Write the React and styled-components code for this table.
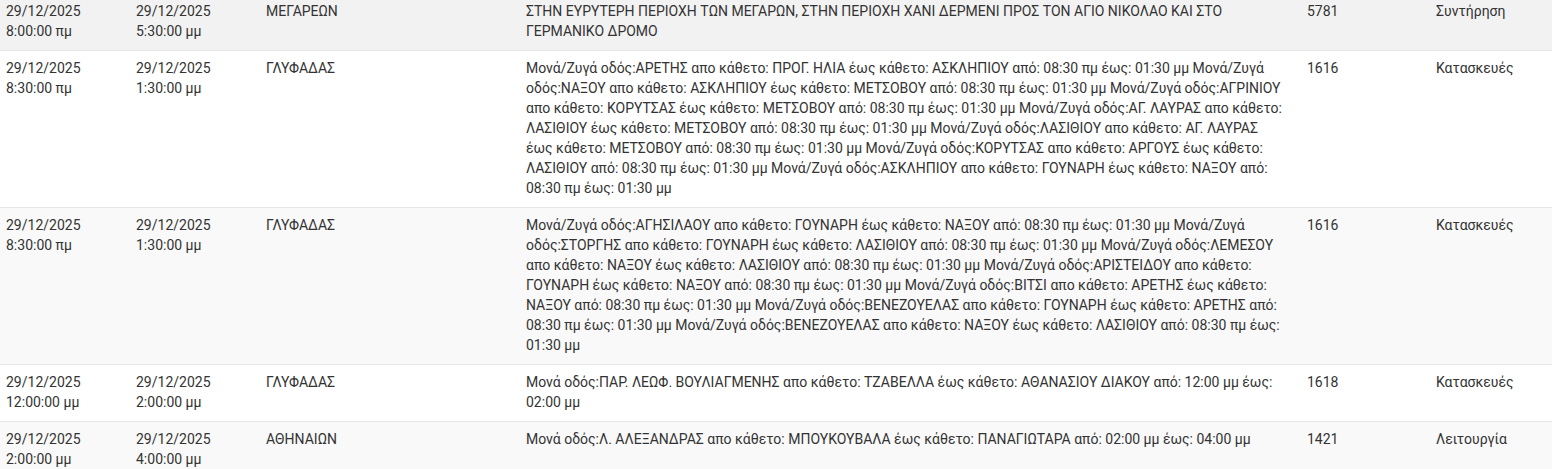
import styled, { createGlobalStyle } from "styled-components";

const GlobalStyle = createGlobalStyle`
  html, body {
    margin: 0;
    padding: 0;
    background: #fff;
    overflow: hidden;
  }
  body {
    font-family: Roboto, "Liberation Sans", sans-serif;
    font-size: 14px;
    color: #333;
  }
`;

const TableWrap = styled.div`
  width: 1552px;
  margin-top: -7px;
`;

const Table = styled.table`
  width: 100%;
  border-collapse: collapse;
  table-layout: fixed;
`;

const Row = styled.tr`
  background: ${props =>
    props.hovered ? "#f2f2f2" : props.striped ? "#f9f9f9" : "#fff"};
  border-top: 1px solid #e6e6e6;
`;

const Cell = styled.td`
  padding: 7px ${props => (props.wide ? "14px" : "6px")} 9px 6px;
  vertical-align: top;
  line-height: 20px;
  word-wrap: break-word;
`;

const Line = styled.div`
  white-space: nowrap;
`;

const outages = [
  {
    from: ["29/12/2025", "8:00:00 πμ"],
    to: ["29/12/2025", "5:30:00 μμ"],
    area: "ΜΕΓΑΡΕΩΝ",
    description:
      "ΣΤΗΝ ΕΥΡΥΤΕΡΗ ΠΕΡΙΟΧΗ ΤΩΝ ΜΕΓΑΡΩΝ, ΣΤΗΝ ΠΕΡΙΟΧΗ ΧΑΝΙ ΔΕΡΜΕΝΙ ΠΡΟΣ ΤΟΝ ΑΓΙΟ ΝΙΚΟΛΑΟ ΚΑΙ ΣΤΟ ΓΕΡΜΑΝΙΚΟ ΔΡΟΜΟ",
    code: "5781",
    reason: "Συντήρηση"
  },
  {
    from: ["29/12/2025", "8:30:00 πμ"],
    to: ["29/12/2025", "1:30:00 μμ"],
    area: "ΓΛΥΦΑΔΑΣ",
    description:
      "Μονά/Ζυγά οδός:ΑΡΕΤΗΣ απο κάθετο: ΠΡΟΓ. ΗΛΙΑ έως κάθετο: ΑΣΚΛΗΠΙΟΥ από: 08:30 πμ έως: 01:30 μμ Μονά/Ζυγά οδός:ΝΑΞΟΥ απο κάθετο: ΑΣΚΛΗΠΙΟΥ έως κάθετο: ΜΕΤΣΟΒΟΥ από: 08:30 πμ έως: 01:30 μμ Μονά/Ζυγά οδός:ΑΓΡΙΝΙΟΥ απο κάθετο: ΚΟΡΥΤΣΑΣ έως κάθετο: ΜΕΤΣΟΒΟΥ από: 08:30 πμ έως: 01:30 μμ Μονά/Ζυγά οδός:ΑΓ. ΛΑΥΡΑΣ απο κάθετο: ΛΑΣΙΘΙΟΥ έως κάθετο: ΜΕΤΣΟΒΟΥ από: 08:30 πμ έως: 01:30 μμ Μονά/Ζυγά οδός:ΛΑΣΙΘΙΟΥ απο κάθετο: ΑΓ. ΛΑΥΡΑΣ έως κάθετο: ΜΕΤΣΟΒΟΥ από: 08:30 πμ έως: 01:30 μμ Μονά/Ζυγά οδός:ΚΟΡΥΤΣΑΣ απο κάθετο: ΑΡΓΟΥΣ έως κάθετο: ΛΑΣΙΘΙΟΥ από: 08:30 πμ έως: 01:30 μμ Μονά/Ζυγά οδός:ΑΣΚΛΗΠΙΟΥ απο κάθετο: ΓΟΥΝΑΡΗ έως κάθετο: ΝΑΞΟΥ από: 08:30 πμ έως: 01:30 μμ",
    code: "1616",
    reason: "Κατασκευές"
  },
  {
    from: ["29/12/2025", "8:30:00 πμ"],
    to: ["29/12/2025", "1:30:00 μμ"],
    area: "ΓΛΥΦΑΔΑΣ",
    description:
      "Μονά/Ζυγά οδός:ΑΓΗΣΙΛΑΟΥ απο κάθετο: ΓΟΥΝΑΡΗ έως κάθετο: ΝΑΞΟΥ από: 08:30 πμ έως: 01:30 μμ Μονά/Ζυγά οδός:ΣΤΟΡΓΗΣ απο κάθετο: ΓΟΥΝΑΡΗ έως κάθετο: ΛΑΣΙΘΙΟΥ από: 08:30 πμ έως: 01:30 μμ Μονά/Ζυγά οδός:ΛΕΜΕΣΟΥ απο κάθετο: ΝΑΞΟΥ έως κάθετο: ΛΑΣΙΘΙΟΥ από: 08:30 πμ έως: 01:30 μμ Μονά/Ζυγά οδός:ΑΡΙΣΤΕΙΔΟΥ απο κάθετο: ΓΟΥΝΑΡΗ έως κάθετο: ΝΑΞΟΥ από: 08:30 πμ έως: 01:30 μμ Μονά/Ζυγά οδός:ΒΙΤΣΙ απο κάθετο: ΑΡΕΤΗΣ έως κάθετο: ΝΑΞΟΥ από: 08:30 πμ έως: 01:30 μμ Μονά/Ζυγά οδός:ΒΕΝΕΖΟΥΕΛΑΣ απο κάθετο: ΓΟΥΝΑΡΗ έως κάθετο: ΑΡΕΤΗΣ από: 08:30 πμ έως: 01:30 μμ Μονά/Ζυγά οδός:ΒΕΝΕΖΟΥΕΛΑΣ απο κάθετο: ΝΑΞΟΥ έως κάθετο: ΛΑΣΙΘΙΟΥ από: 08:30 πμ έως: 01:30 μμ",
    code: "1616",
    reason: "Κατασκευές"
  },
  {
    from: ["29/12/2025", "12:00:00 μμ"],
    to: ["29/12/2025", "2:00:00 μμ"],
    area: "ΓΛΥΦΑΔΑΣ",
    description:
      "Μονά οδός:ΠΑΡ. ΛΕΩΦ. ΒΟΥΛΙΑΓΜΕΝΗΣ απο κάθετο: ΤΖΑΒΕΛΛΑ έως κάθετο: ΑΘΑΝΑΣΙΟΥ ΔΙΑΚΟΥ από: 12:00 μμ έως: 02:00 μμ",
    code: "1618",
    reason: "Κατασκευές"
  },
  {
    from: ["29/12/2025", "2:00:00 μμ"],
    to: ["29/12/2025", "4:00:00 μμ"],
    area: "ΑΘΗΝΑΙΩΝ",
    description:
      "Μονά οδός:Λ. ΑΛΕΞΑΝΔΡΑΣ απο κάθετο: ΜΠΟΥΚΟΥΒΑΛΑ έως κάθετο: ΠΑΝΑΓΙΩΤΑΡΑ από: 02:00 μμ έως: 04:00 μμ",
    code: "1421",
    reason: "Λειτουργία"
  }
];

function DateCell({ value }) {
  return (
    <Cell>
      <Line>{value[0]}</Line>
      <Line>{value[1]}</Line>
    </Cell>
  );
}

export default function App() {
  return (
    <>
      <GlobalStyle />
      <TableWrap>
        <Table>
          <colgroup>
            <col style={{ width: 130 }} />
            <col style={{ width: 130 }} />
            <col style={{ width: 260 }} />
            <col style={{ width: 781 }} />
            <col style={{ width: 129 }} />
            <col />
          </colgroup>
          <tbody>
            {outages.map((item, i) => (
              <Row key={i} hovered={i === 0} striped={i % 2 === 0}>
                <DateCell value={item.from} />
                <DateCell value={item.to} />
                <Cell>{item.area}</Cell>
                <Cell wide>{item.description}</Cell>
                <Cell>{item.code}</Cell>
                <Cell>{item.reason}</Cell>
              </Row>
            ))}
          </tbody>
        </Table>
      </TableWrap>
    </>
  );
}
